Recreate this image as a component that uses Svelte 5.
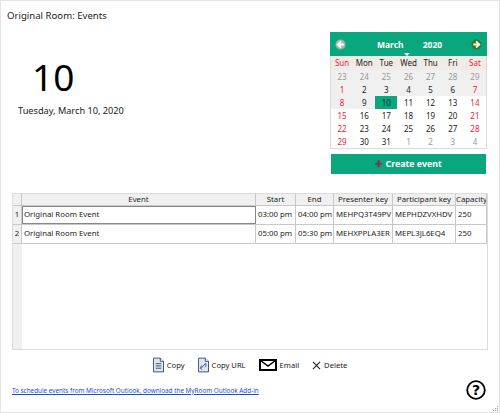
<script>
	const weekdays = ["Sun", "Mon", "Tue", "Wed", "Thu", "Fri", "Sat"];
	// dim: day from another month, shade: grey background before today
	let days = [];
	const prev = [23, 24, 25, 26, 27, 28, 29];
	for (const d of prev) days.push({ d, dim: true, shade: true });
	for (let d = 1; d <= 31; d++) days.push({ d, shade: d < 10, current: d === 10 });
	for (let d = 1; d <= 4; d++) days.push({ d, dim: true });

	const events = [
		{ name: "Original Room Event", start: "03:00 pm", end: "04:00 pm", presenter: "MEHPQ3T49PV", participant: "MEPHDZVXHDV", capacity: 250 },
		{ name: "Original Room Event", start: "05:00 pm", end: "05:30 pm", presenter: "MEHXPPLA3ER", participant: "MEPL3JL6EQ4", capacity: 250 },
	];
</script>

<div class="window">
	<div class="title">Original Room: Events</div>

	<div class="top">
		<div class="today">
			<div class="bigDay">10</div>
			<div class="longDate">Tuesday, March 10, 2020</div>
		</div>
		<div class="side">
			<div class="calendar">
				<div class="calHead">
					<svg class="nav" viewBox="0 0 12 12" width="11" height="11">
						<circle cx="6" cy="6" r="5.5" fill="#a9b5b0" />
						<path d="M6.5 2.5 3 6l3.5 3.5M3.2 6H9.5" fill="none" stroke="#fff" stroke-width="2" />
					</svg>
					<div class="month">March<span class="caret"></span></div>
					<div class="year">2020</div>
					<svg class="nav" viewBox="0 0 12 12" width="11" height="11">
						<circle cx="6" cy="6" r="5.5" fill="#2f7d1e" />
						<path d="M5.5 2.5 9 6 5.5 9.5M8.8 6H2.5" fill="none" stroke="#fff" stroke-width="2" />
					</svg>
				</div>
				<div class="weekdays">
					{#each weekdays as w, i}
						<div class:red={i === 0 || i === 6}>{w}</div>
					{/each}
				</div>
				<div class="days">
					{#each days as day, i}
						<div
							class="day"
							class:shade={day.shade}
							class:dim={day.dim}
							class:current={day.current}
							class:red={!day.dim && (i % 7 === 0 || i % 7 === 6)}
						>{day.d}</div>
					{/each}
				</div>
			</div>
			<button class="create"><span class="plus">✚</span> Create event</button>
		</div>
	</div>

	<div class="grid">
		<div class="row head">
			<div class="num"></div>
			<div class="cell c">Event</div>
			<div class="cell c">Start</div>
			<div class="cell c">End</div>
			<div class="cell c">Presenter key</div>
			<div class="cell c">Participant key</div>
			<div class="cell c">Capacity</div>
		</div>
		{#each events as ev, i}
			<div class="row body">
				<div class="num">{i + 1}</div>
				<div class="cell name" class:selected={i === 0}>{ev.name}</div>
				<div class="cell">{ev.start}</div>
				<div class="cell">{ev.end}</div>
				<div class="cell">{ev.presenter}</div>
				<div class="cell">{ev.participant}</div>
				<div class="cell">{ev.capacity}</div>
			</div>
		{/each}
		<div class="rest"><div class="restNum"></div></div>
	</div>

	<div class="actions">
		<div class="action">
			<svg width="11" height="16" viewBox="0 0 12 16">
				<path d="M.5.5H8L11.5 4V15.500H.5Z" fill="#dfe6f0" stroke="#2f4a70" />
				<path d="M8 .5V4H11.500" fill="#fff" stroke="#2f4a70" />
				<path d="M3 6.500H9M3 9H9M3 11.500H9" stroke="#2f4a70" />
			</svg>
			Copy
		</div>
		<div class="action">
			<svg width="11" height="16" viewBox="0 0 12 16">
				<path d="M.5.5H8L11.500 4V15.500H.5Z" fill="#dfe6f0" stroke="#2f4a70" />
				<path d="M8 .5V4H11.500" fill="#fff" stroke="#2f4a70" />
				<path d="M3 12 8 6.500M4 8.500C2.500 10 2.500 12 4 13M7.500 10.500C9 9.500 9 7 8 6" fill="none" stroke="#2f4a70" />
			</svg>
			Copy URL
		</div>
		<div class="action">
			<svg width="18" height="12" viewBox="0 0 18 12">
				<rect x="1" y="1" width="16" height="10" fill="#fff" stroke="#000" stroke-width="2" />
				<path d="M1.500 1.500 9 7l7.500-5.500" fill="none" stroke="#000" stroke-width="1.500" />
			</svg>
			Email
		</div>
		<div class="action">
			<svg width="9" height="9" viewBox="0 0 10 10">
				<path d="M1 1 9 9M9 1 1 9" stroke="#222" stroke-width="1.200" />
			</svg>
			Delete
		</div>
	</div>

	<div class="footer">
		<span class="link">To schedule events from Microsoft Outlook, download the MyRoom Outlook Add-in</span>
		<svg class="help" width="20" height="20" viewBox="0 0 20 20">
			<circle cx="10" cy="10" r="8.800" fill="#fff" stroke="#000" stroke-width="1.800" />
			<text x="10" y="15" text-anchor="middle">?</text>
		</svg>
	</div>

	<svg class="grip" width="7" height="7" viewBox="0 0 7 7">
		<path d="M5 1h1v1H5zM3 3h1v1H3zM5 3h1v1H5zM1 5h1v1H1zM3 5h1v1H3zM5 5h1v1H5z" fill="#999" />
	</svg>
</div>

<style>
	:global(body) {
		margin: 0;
	}
	.window {
		position: relative;
		width: 500px;
		height: 413px;
		box-sizing: border-box;
		background: #fff;
		border: 1px solid #e4e4e4;
		padding: 0 11px;
		font-family: "Noto Sans", sans-serif;
		font-size: 9.200px;
		color: #222;
		overflow: hidden;
	}
	.title {
		margin: 9px 0 0 -5px;
		font-size: 9.600px;
		line-height: 12px;
		height: 12px;
	}
	.top {
		display: flex;
		justify-content: space-between;
		height: 151px;
	}
	.today {
		padding: 33px 0 0 6px;
	}
	.bigDay {
		font-size: 37px;
		line-height: 44px;
		margin-left: 14px;
		color: #000;
	}
	.longDate {
		margin-top: 6px;
		line-height: 12px;
	}
	.side {
		width: 157px;
		margin: 10px 1px 0 0;
	}
	.calendar {
		border: 1px solid #dcdcdc;
		border-top: none;
		box-sizing: border-box;
		height: 117px;
		font-size: 8px;
	}
	.calHead {
		height: 24px;
		margin: 0 -1px;
		background: #0aa67e;
		color: #fff;
		display: flex;
		align-items: center;
		padding: 0 5px;
		font-weight: bold;
		font-size: 8.500px;
	}
	.month {
		position: relative;
		margin-left: 31px;
	}
	.caret {
		position: absolute;
		left: 27px;
		top: 14px;
		border: 3px solid transparent;
		border-top: 3px solid #fff;
		border-bottom: none;
	}
	.year {
		margin-left: 19px;
		margin-right: auto;
	}
	.weekdays {
		display: grid;
		grid-template-columns: repeat(7, 1fr);
		background: #efece6;
		height: 14px;
		line-height: 14px;
		text-align: center;
	}
	.days {
		display: grid;
		grid-template-columns: repeat(7, 1fr);
		grid-auto-rows: 13px;
		text-align: center;
		line-height: 13px;
	}
	.shade {
		background: #f0f0f0;
	}
	.dim {
		color: #999;
	}
	.red {
		color: #f0203a;
	}
	.day.current {
		background: #0aa67e;
		color: #033;
	}
	.create {
		display: block;
		width: 155px;
		height: 20px;
		margin: 5px 0 0 1px;
		padding: 0;
		border: none;
		background: #0aa67e;
		color: #fff;
		font: bold 8.800px "Noto Sans", sans-serif;
	}
	.plus {
		color: #7a3a4a;
	}
	.grid {
		margin-top: 20px;
		width: 476px;
		height: 157px;
		box-sizing: border-box;
		border: 1px solid #dcdcdc;
		display: flex;
		flex-direction: column;
		font-size: 7.800px;
	}
	.row {
		display: grid;
		grid-template-columns: 9px 234px 40px 38px 59px 63px 1fr;
	}
	.head {
		height: 11px;
		line-height: 11px;
		background: #f0f0f0;
		border-bottom: 1px solid #c8c8c8;
	}
	.body {
		height: 18px;
		line-height: 17px;
		border-bottom: 1px solid #c8c8c8;
	}
	.num {
		background: #f0f0f0;
		border-right: 1px solid #c8c8c8;
		text-align: center;
	}
	.cell {
		border-right: 1px solid #c8c8c8;
		padding-left: 2px;
		white-space: nowrap;
		overflow: hidden;
	}
	.cell.c {
		text-align: center;
		padding: 0;
	}
	.selected {
		outline: 1px solid #888;
		outline-offset: -1px;
	}
	.rest {
		flex: 1;
	}
	.restNum {
		width: 9px;
		height: 100%;
		background: #f0f0f0;
		box-sizing: border-box;
	}
	.actions {
		display: flex;
		justify-content: center;
		align-items: center;
		gap: 13px;
		height: 30px;
		font-size: 7.600px;
	}
	.action {
		display: flex;
		align-items: center;
		gap: 3px;
	}
	.footer {
		display: flex;
		justify-content: space-between;
		align-items: center;
		padding-right: 2px;
	}
	.link {
		color: #1a4fd8;
		text-decoration: underline;
		font-size: 6.350px;
	}
	.help text {
		font: bold 14px "DejaVu Sans", sans-serif;
	}
	.grip {
		position: absolute;
		right: 0;
		bottom: 0;
	}
</style>
